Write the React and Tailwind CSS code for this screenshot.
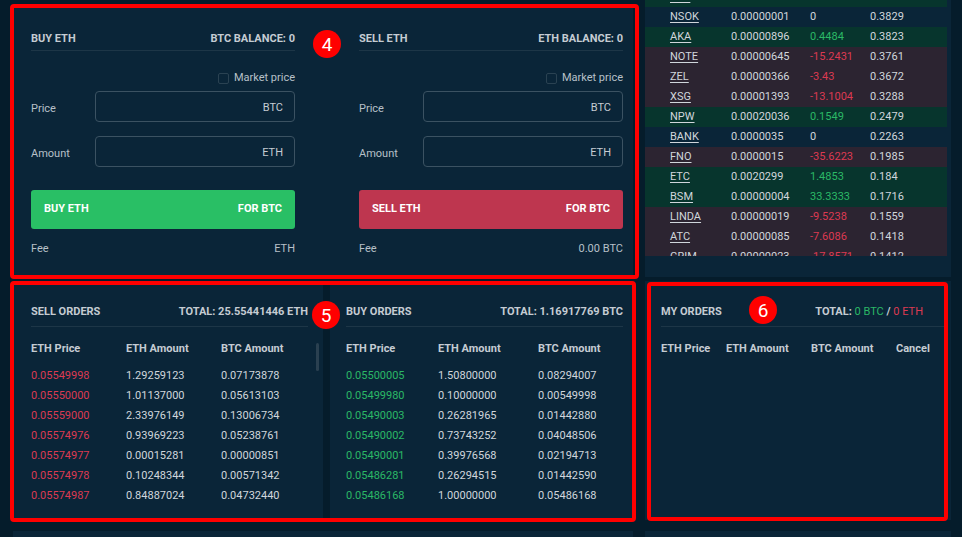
import React from "react";

const market = [
  ["EOS", "0.00000030", "2.1234", "0.3901", "g"],
  ["NSOK", "0.00000001", "0", "0.3829", "n"],
  ["AKA", "0.00000896", "0.4484", "0.3823", "g"],
  ["NOTE", "0.00000645", "-15.2431", "0.3761", "r"],
  ["ZEL", "0.00000366", "-3.43", "0.3672", "r"],
  ["XSG", "0.00001393", "-13.1004", "0.3288", "r"],
  ["NPW", "0.00020036", "0.1549", "0.2479", "g"],
  ["BANK", "0.0000035", "0", "0.2263", "n"],
  ["FNO", "0.0000015", "-35.6223", "0.1985", "r"],
  ["ETC", "0.0020299", "1.4853", "0.184", "g"],
  ["BSM", "0.00000004", "33.3333", "0.1716", "g"],
  ["LINDA", "0.00000019", "-9.5238", "0.1559", "r"],
  ["ATC", "0.00000085", "-7.6086", "0.1418", "r"],
  ["GRIM", "0.00000023", "-17.8571", "0.1412", "r"],
];

const sells = [
  ["0.05549998", "1.29259123", "0.07173878"],
  ["0.05550000", "1.01137000", "0.05613103"],
  ["0.05559000", "2.33976149", "0.13006734"],
  ["0.05574976", "0.93969223", "0.05238761"],
  ["0.05574977", "0.00015281", "0.00000851"],
  ["0.05574978", "0.10248344", "0.00571342"],
  ["0.05574987", "0.84887024", "0.04732440"],
];

const buys = [
  ["0.05500005", "1.50800000", "0.08294007"],
  ["0.05499980", "0.10000000", "0.00549998"],
  ["0.05490003", "0.26281965", "0.01442880"],
  ["0.05490002", "0.73743252", "0.04048506"],
  ["0.05490001", "0.39976568", "0.02194713"],
  ["0.05486281", "0.26294515", "0.01442590"],
  ["0.05486168", "1.00000000", "0.05486168"],
];

function TradeForm({ title, balance, btnText, btnColor, fee }) {
  return (
    <div className="w-[264px] flex flex-col">
      <div className="mt-[25px] h-[16px] flex items-center justify-between font-bold text-[11px] text-[#c5ccd3]">
        <span>{title}</span>
        <span>{balance}</span>
      </div>
      <div className="mt-[3px] h-px bg-[#1d3647]" />
      <div className="mt-[20px] h-[14px] flex items-center justify-end gap-[5px] text-[11px] text-[#b7c0c8]">
        <span className="w-[11px] h-[11px] rounded-[2px] border border-[#2a4252]" />
        <span>Market price</span>
      </div>
      <div className="mt-[6px] flex items-center">
        <span className="w-[64px] text-[11px] text-[#b7c0c8] mt-[5px]">Price</span>
        <div className="w-[200px] h-[31px] rounded-[4px] border border-[#3b5262] flex items-center justify-end pr-[11px] pt-[4px] text-[11px] text-[#c5ccd3]">
          BTC
        </div>
      </div>
      <div className="mt-[14px] flex items-center">
        <span className="w-[64px] text-[11px] text-[#b7c0c8] mt-[5px]">Amount</span>
        <div className="w-[200px] h-[31px] rounded-[4px] border border-[#3b5262] flex items-center justify-end pr-[11px] pt-[4px] text-[11px] text-[#c5ccd3]">
          ETH
        </div>
      </div>
      <div
        className={`mt-[23px] h-[39px] rounded-[3px] flex items-center justify-between px-[13px] text-[11px] font-bold text-white ${btnColor}`}
      >
        <span>{btnText}</span>
        <span>FOR BTC</span>
      </div>
      <div className="mt-[12px] h-[16px] flex items-center justify-between text-[11px] text-[#b7c0c8]">
        <span>Fee</span>
        <span>{fee}</span>
      </div>
    </div>
  );
}

function OrdersTable({ title, total, rows, priceColor, cols }) {
  return (
    <div className="flex flex-col">
      <div className="mt-[23px] h-[16px] flex items-center justify-between font-bold text-[11px] text-[#c5ccd3]">
        <span>{title}</span>
        <span>{total}</span>
      </div>
      <div className="mt-[6px] h-px bg-[#1d3647]" />
      <div className="mt-[14px] h-[16px] flex items-center font-bold text-[11px] text-[#c5ccd3]">
        <span className={cols[0]}>ETH Price</span>
        <span className={cols[1]}>ETH Amount</span>
        <span>BTC Amount</span>
      </div>
      <div className="mt-[9px] flex flex-col">
        {rows.map((r, i) => (
          <div key={i} className="h-[20px] flex items-center text-[11px]">
            <span className={`${cols[0]} ${priceColor}`}>{r[0]}</span>
            <span className={`${cols[1]} text-[#d0d6dc]`}>{r[1]}</span>
            <span className="text-[#d0d6dc]">{r[2]}</span>
          </div>
        ))}
      </div>
    </div>
  );
}

function Badge({ n, className }) {
  return (
    <div
      className={`absolute w-[28px] h-[28px] rounded-full bg-[#ff0000] flex items-center justify-center text-white text-[19px] leading-none ${className}`}
    >
      {n}
    </div>
  );
}

export default function App() {
  const rowBg = { g: "bg-[#07352d]", r: "bg-[#2c2431]", n: "" };
  const chColor = { g: "text-[#2bb866]", r: "text-[#dc3a52]", n: "text-[#d0d6dc]" };
  return (
    <div
      className="relative w-[962px] h-[537px] overflow-hidden bg-[#051c2b]"
      style={{ fontFamily: "Roboto, 'Liberation Sans', sans-serif" }}
    >
      <div className="flex pl-[13px] gap-[12px]">
        {/* left column */}
        <div className="w-[620px] flex flex-col">
          <div className="mt-[6px] h-[270px] bg-[#0a2538] flex pl-[18px] pr-[10px] gap-[64px]">
            <TradeForm
              title="BUY ETH"
              balance="BTC BALANCE: 0"
              btnText="BUY ETH"
              btnColor="bg-[#29bf65]"
              fee="ETH"
            />
            <TradeForm
              title="SELL ETH"
              balance="ETH BALANCE: 0"
              btnText="SELL ETH"
              btnColor="bg-[#be364f]"
              fee="0.00 BTC"
            />
          </div>
          <div className="mt-[5px] h-[238px] flex gap-[7px]">
            <div className="w-[310px] bg-[#0a2538] pl-[18px] pr-[15px] relative">
              <OrdersTable
                title="SELL ORDERS"
                total="TOTAL: 25.55441446 ETH"
                rows={sells}
                priceColor="text-[#dc3a52]"
                cols={["w-[95px]", "w-[95px]"]}
              />
              <div className="absolute right-[4px] top-[62px] w-[3px] h-[28px] rounded bg-[#2a4050]" />
            </div>
            <div className="w-[303px] bg-[#0a2538] pl-[16px] pr-[10px]">
              <OrdersTable
                title="BUY ORDERS"
                total="TOTAL: 1.16917769 BTC"
                rows={buys}
                priceColor="text-[#2bb866]"
                cols={["w-[92px]", "w-[100px]"]}
              />
            </div>
          </div>
          <div className="mt-[12px] h-[40px] bg-[#0a2538]" />
        </div>

        {/* right column */}
        <div className="w-[306px] flex flex-col">
          <div className="h-[277px] bg-[#0a2538] pr-[4px]">
            <div className="h-[256px] overflow-hidden">
              <div className="mt-[-13px] flex flex-col">
                {market.map((m, i) => (
                  <div key={i} className={`h-[20px] flex items-center text-[11px] ${rowBg[m[4]]}`}>
                    <span className="ml-[25px] w-[61px] text-[#d0d6dc] underline underline-offset-2">{m[0]}</span>
                    <span className="w-[79px] text-[#d0d6dc]">{m[1]}</span>
                    <span className={`w-[60px] ${chColor[m[4]]}`}>{m[2]}</span>
                    <span className="text-[#d0d6dc]">{m[3]}</span>
                  </div>
                ))}
              </div>
            </div>
          </div>
          <div className="mt-[4px] h-[239px] bg-[#0a2538] pl-[16px] pr-[7px] flex flex-col">
            <div className="mt-[23px] h-[16px] flex items-center justify-between font-bold text-[11px] text-[#c5ccd3]">
              <span>MY ORDERS</span>
              <span className="mr-[21px]">
                TOTAL: <span className="font-normal text-[#2bb866]">0 BTC</span> /{" "}
                <span className="font-normal text-[#dc3a52]">0 ETH</span>
              </span>
            </div>
            <div className="mt-[6px] h-px bg-[#1d3647]" />
            <div className="mt-[14px] h-[16px] flex items-center font-bold text-[11px] text-[#c5ccd3]">
              <span className="w-[65px]">ETH Price</span>
              <span className="w-[85px]">ETH Amount</span>
              <span className="w-[85px]">BTC Amount</span>
              <span>Cancel</span>
            </div>
          </div>
          <div className="mt-[11px] h-[40px] bg-[#0a2538]" />
        </div>
      </div>

      {/* annotation overlays */}
      <div className="absolute left-[10px] top-[4px] w-[629px] h-[275px] border-[4px] border-[#ff0000] rounded-[4px]" />
      <div className="absolute left-[10px] top-[281px] w-[626px] h-[241px] border-[4px] border-[#ff0000] rounded-[4px]" />
      <div className="absolute left-[647px] top-[282px] w-[301px] h-[239px] border-[4px] border-[#ff0000] rounded-[4px]" />
      <Badge n="4" className="left-[313px] top-[30px]" />
      <Badge n="5" className="left-[312px] top-[301px]" />
      <Badge n="6" className="left-[749px] top-[296px]" />
    </div>
  );
}
